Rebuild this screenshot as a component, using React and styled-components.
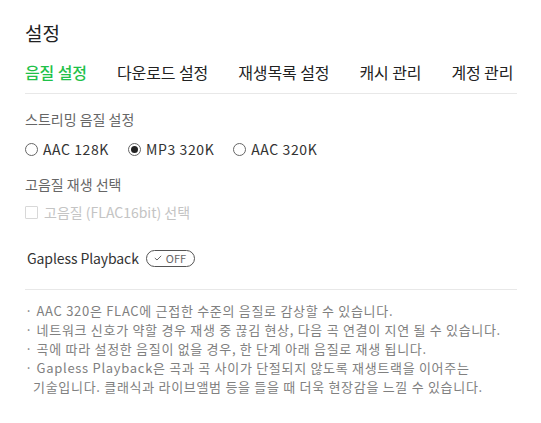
import React from "react";
import styled, { createGlobalStyle } from "styled-components";

const Global = createGlobalStyle`
  html, body { margin: 0; padding: 0; background: #fff; }
  body { font-family: "Noto Sans CJK KR", "Noto Sans", sans-serif; color: #333; }
  * { box-sizing: border-box; }
`;

const Page = styled.div`
  width: 541px;
  padding: 18px 24px 20px 25px;
`;

const Title = styled.h1`
  margin: 0;
  font-size: 19px;
  font-weight: 400;
  line-height: 30px;
  color: #222;
`;

const Tabs = styled.nav`
  display: flex;
  gap: 30px;
  margin-top: 12px;
  padding-bottom: 9px;
  border-bottom: 1px solid #e8e8e8;
`;

const Tab = styled.span`
  flex-shrink: 0;
  white-space: nowrap;
  font-size: 16px;
  line-height: 24px;
  letter-spacing: -0.1px;
  color: ${(p) => (p.$active ? "#1fc14a" : "#222")};
  font-weight: ${(p) => (p.$active ? 500 : 400)};
`;

const Section = styled.section`
  padding-top: 15px;
`;

const Label = styled.div`
  font-size: 14px;
  line-height: 20px;
  color: #666;
  margin-bottom: ${(p) => p.$mb}px;
`;

const RadioRow = styled.div`
  display: flex;
  gap: 19px;
  margin-bottom: 15px;
`;

const Option = styled.label`
  display: flex;
  align-items: center;
  gap: 5px;
  font-size: 14px;
  line-height: 20px;
  letter-spacing: ${(p) => (p.$disabled ? 0 : 0.6)}px;
  color: ${(p) => (p.$disabled ? "#c4c4c4" : "#333")};
`;

const Radio = styled.span`
  width: 13px;
  height: 13px;
  border-radius: 50%;
  border: 1px solid #666;
  display: inline-flex;
  align-items: center;
  justify-content: center;
  &::after {
    content: "";
    width: 7px;
    height: 7px;
    border-radius: 50%;
    background: ${(p) => (p.$checked ? "#222" : "transparent")};
  }
`;

const Check = styled.span`
  width: 13px;
  height: 13px;
  border: 1px solid #d8d8d8;
  border-radius: 1px;
  margin-right: 1px;
`;

const GaplessRow = styled.div`
  display: flex;
  align-items: center;
  gap: 7px;
  margin-top: 26px;
  padding-left: 2px;
  padding-bottom: 21px;
  border-bottom: 1px solid #e8e8e8;
`;

const GaplessText = styled.span`
  font-size: 14px;
  line-height: 20px;
  color: #333;
  letter-spacing: -0.1px;
`;

const Toggle = styled.span`
  display: inline-flex;
  align-items: center;
  gap: 4px;
  height: 17px;
  padding: 0 8px 0 7px;
  border: 1px solid #555;
  border-radius: 9px;
  font-size: 11px;
  color: #666;
  line-height: 15px;
`;

const Notes = styled.ul`
  list-style: none;
  margin: 0;
  padding: 11px 0 0 0;
`;

const Note = styled.li`
  font-size: 13px;
  line-height: 19px;
  color: #808080;
  padding-left: 8px;
  text-indent: -8px;
  letter-spacing: 0.7px;
`;

export default function App() {
  return (
    <Page>
      <Global />
      <Title>설정</Title>
      <Tabs>
        <Tab $active>음질 설정</Tab>
        <Tab>다운로드 설정</Tab>
        <Tab>재생목록 설정</Tab>
        <Tab>캐시 관리</Tab>
        <Tab>계정 관리</Tab>
      </Tabs>
      <Section>
        <Label $mb={10}>스트리밍 음질 설정</Label>
        <RadioRow>
          <Option><Radio />AAC 128K</Option>
          <Option><Radio $checked />MP3 320K</Option>
          <Option><Radio />AAC 320K</Option>
        </RadioRow>
        <Label $mb={8}>고음질 재생 선택</Label>
        <Option $disabled><Check />고음질 (FLAC16bit) 선택</Option>
        <GaplessRow>
          <GaplessText>Gapless Playback</GaplessText>
          <Toggle>
            <svg width="8" height="6" viewBox="0 0 8 6" fill="none">
              <path d="M0.8 3 L3 5 L7.2 0.8" stroke="#666" strokeWidth="1" />
            </svg>
            OFF
          </Toggle>
        </GaplessRow>
        <Notes>
          <Note>· AAC 320은 FLAC에 근접한 수준의 음질로 감상할 수 있습니다.</Note>
          <Note>· 네트워크 신호가 약할 경우 재생 중 끊김 현상, 다음 곡 연결이 지연 될 수 있습니다.</Note>
          <Note>· 곡에 따라 설정한 음질이 없을 경우, 한 단계 아래 음질로 재생 됩니다.</Note>
          <Note>· Gapless Playback은 곡과 곡 사이가 단절되지 않도록 재생트랙을 이어주는<br />기술입니다. 클래식과 라이브앨범 등을 들을 때 더욱 현장감을 느낄 수 있습니다.</Note>
        </Notes>
      </Section>
    </Page>
  );
}
